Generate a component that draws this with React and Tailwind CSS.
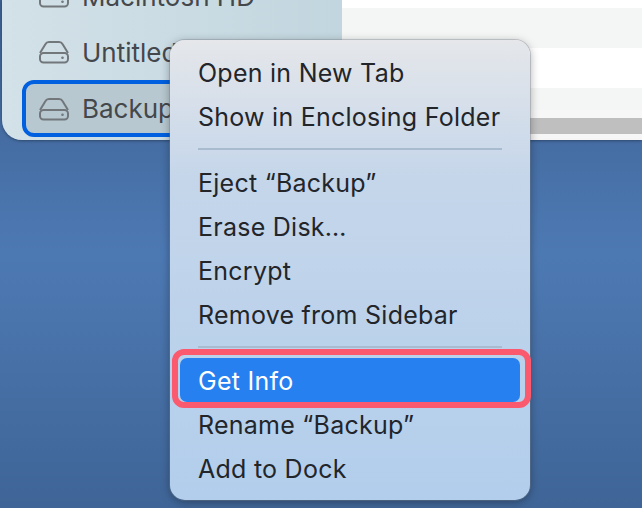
const Drive = ({ lines }) => (
  <svg width="32" height="24" viewBox="0 0 32 24" fill="none" stroke="#71777b" strokeWidth="2" className="shrink-0">
    <path d="M2 13 L7.5 4 Q8.5 2 11 2 H21 Q23.5 2 24.5 4 L30 13" />
    <rect x="2" y="13" width="28" height="9.5" rx="3.5" />
    <circle cx="24.5" cy="17.8" r="1.3" fill="#71777b" stroke="none" />
    {lines && <path d="M10 4v6M13 4v6M16 4v6M19 4v6M22 4v6" strokeWidth="1.2" />}
  </svg>
);

const Item = ({ children, active }) => (
  <div className={active
    ? "relative h-11 -mt-[2px] mb-[2px] pt-[4px] mx-[10px] pl-[18px] flex items-center rounded-[7px] bg-[#2680f0] text-white"
    : "h-11 mx-[10px] pl-[18px] flex items-center text-[#22252a]"}>
    {children}
    {active && <div className="absolute -left-[8px] -right-[11px] -top-[9px] -bottom-[6px] rounded-[12px] border-[6px] border-[#fb5a6e]" />}
  </div>
);

const Sep = () => (
  <div className="h-[22px] pt-[8px] px-[28px]"><div className="h-[2px] w-full bg-[#a9bccf]" /></div>
);

export default function App() {
  return (
    <div className="relative w-[642px] h-[508px] overflow-hidden bg-gradient-to-b from-[#3b5f90] via-[#4d79b3] to-[#3f6597]" style={{ fontFamily: "Inter, 'Liberation Sans', sans-serif" }}>
      <div className="flex h-[140px] ml-[2px] rounded-bl-[20px] overflow-hidden shadow-[0_1px_3px_rgba(0,0,0,0.35)]">
        <div className="w-[340px] shrink-0 bg-gradient-to-r from-[#d3e1e8] to-[#c2d6df] pl-[20px] pr-[6px] text-[26px] text-[#44484c]">
          <div className="h-[56px] -mt-[32px] flex items-center gap-[12px] pl-[12px] border-4 border-transparent">
            <Drive lines /><span>Macintosh HD</span>
          </div>
          <div className="h-[56px] flex items-center gap-[12px] pl-[12px] border-4 border-transparent">
            <Drive /><span>Untitled</span>
          </div>
          <div className="h-[57px] flex items-center gap-[12px] pl-[12px] border-[4px] border-[#0060df] rounded-[12px] bg-[#b8c8d0]">
            <Drive /><span>Backup</span>
          </div>
        </div>
        <div className="flex-1 bg-white flex flex-col">
          <div className="h-[8px]" />
          <div className="h-[40px] bg-[#f4f6f6]" />
          <div className="h-[40px]" />
          <div className="h-[22px] bg-[#f4f6f6]" />
          <div className="h-[8px] bg-[#f7f7f7]" />
          <div className="h-[16px] bg-[#bfbfbf]" />
          <div className="h-[6px] bg-[#f6f6f6]" />
        </div>
      </div>

      <div className="absolute left-[170px] top-[40px] w-[360px] h-[460px] pt-[12px] rounded-[15px] bg-gradient-to-b from-[#e5e7ea] via-[#c5d6ea] via-30% to-[#b2ceec] text-[25px] tracking-[0.25px] shadow-[0_0_0_1px_rgba(120,130,140,0.35),0_2px_10px_rgba(0,0,0,0.35)]">
        <Item>Open in New Tab</Item>
        <Item>Show in Enclosing Folder</Item>
        <Sep />
        <Item>Eject “Backup”</Item>
        <Item>Erase Disk…</Item>
        <Item>Encrypt</Item>
        <Item>Remove from Sidebar</Item>
        <Sep />
        <Item active>Get Info</Item>
        <Item>Rename “Backup”</Item>
        <Item>Add to Dock</Item>
      </div>
    </div>
  );
}
